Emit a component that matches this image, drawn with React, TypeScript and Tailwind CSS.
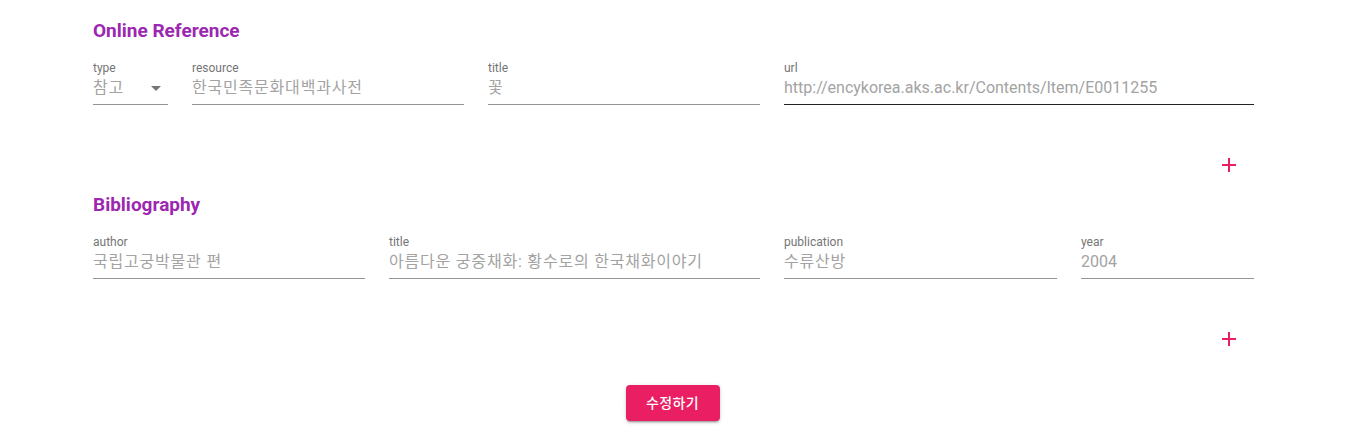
import React from 'react'

const font = { fontFamily: "Roboto, 'Noto Sans CJK KR', sans-serif" }

function Field({ label, value, width, dark, select, ko }: { label: string; value: string; width: string; dark?: boolean; select?: boolean; ko?: boolean }) {
  return (
    <div className={`${width} shrink-0 flex flex-col`}>
      <div className="mt-[2px] text-[12px] leading-3 text-[#757575]">{label}</div>
      <div
        className={`relative pt-[4px] pb-[7px] text-[16px] leading-[19px] text-[#a3a3a3] whitespace-nowrap border-b ${
          ko ? 'tracking-[0.8px]' : ''
        } ${dark ? 'border-[#222222]' : 'border-[#949494]'}`}
      >
        {value}
        {select && (
          <svg viewBox="0 0 24 24" className="absolute right-0 top-[2px] w-6 h-6" fill="#757575">
            <path d="M7 10l5 5 5-5z" />
          </svg>
        )}
      </div>
    </div>
  )
}

function AddButton() {
  return (
    <div className="flex justify-end mt-[36px] pr-px">
      <button className="w-12 h-12 p-3 rounded-full flex items-center justify-center">
        <svg viewBox="0 0 24 24" className="w-6 h-6" fill="#e91e63">
          <path d="M19 13h-6v6h-2v-6H5v-2h6V5h2v6h6v2z" />
        </svg>
      </button>
    </div>
  )
}

function Section({ title, children }: { title: string; children: React.ReactNode }) {
  return (
    <section>
      <h2 className="pt-[2px] text-[19px] leading-6 font-bold text-[#9c27b0]">{title}</h2>
      <div className="mt-[17px] flex gap-6">{children}</div>
      <AddButton />
    </section>
  )
}

export default function App() {
  return (
    <div className="w-[1345px] h-[427px] bg-white overflow-hidden" style={font}>
      <div className="pt-[17px] pl-[93px] pr-[91px] flex flex-col gap-[2px]">
        <Section title="Online Reference">
          <Field label="type" value="참고" width="w-[75px]" select ko />
          <Field label="resource" value="한국민족문화대백과사전" width="w-[272px]" ko />
          <Field label="title" value="꽃" width="w-[272px]" ko />
          <Field label="url" value="http://encykorea.aks.ac.kr/Contents/Item/E0011255" width="w-[470px]" dark />
        </Section>
        <Section title="Bibliography">
          <Field label="author" value="국립고궁박물관 편" width="w-[272px]" ko />
          <Field label="title" value="아름다운 궁중채화: 황수로의 한국채화이야기" width="w-[371px]" ko />
          <Field label="publication" value="수류산방" width="w-[273px]" ko />
          <Field label="year" value="2004" width="w-[173px]" />
        </Section>
      </div>
      <div className="mt-[22px] flex justify-center">
        <button className="w-[94px] h-9 rounded bg-[#e91e63] text-white text-[14px] font-medium tracking-[0.4px] shadow-[0_3px_1px_-2px_rgba(0,0,0,0.2),0_2px_2px_0_rgba(0,0,0,0.14),0_1px_5px_0_rgba(0,0,0,0.12)]">
          수정하기
        </button>
      </div>
    </div>
  )
}
